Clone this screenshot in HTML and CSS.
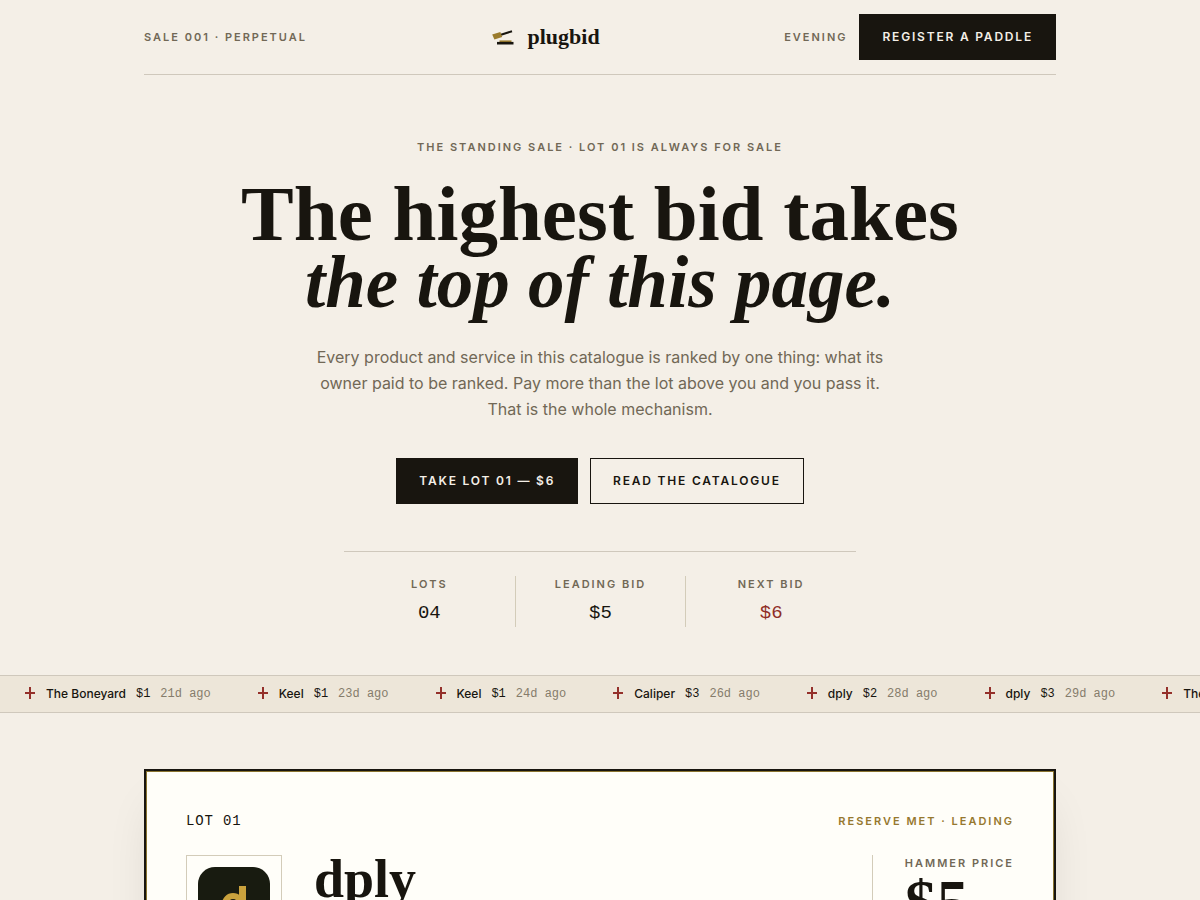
FILE: index.html
```html
<!DOCTYPE html>
<html lang="en">

<head>
    <meta charset="utf-8">
    <meta name="viewport" content="width=device-width, initial-scale=1">
    <title>plugbid</title>
    <link rel="stylesheet" href="styles.css">
</head>

<body>
    <header class="container">
        <div class="masthead">
            <span class="label">Sale 001 · Perpetual</span>
            <a class="brand" href="#">
                <svg class="brand-mark" viewBox="0 0 24 24" aria-hidden="true">
                    <path d="M10 9.800 L21 6.200" stroke="#18150f" stroke-width="2" />
                    <path d="M1.200 9.600 L9.300 7 L11.200 12 L3.400 14.400 Z" fill="#9a7b2c" />
                    <path d="M8.500 16.200 H20.500" stroke="#9a7b2c" stroke-width="1.600" />
                    <path d="M6 18.200 H22.500" stroke="#18150f" stroke-width="2.600" />
                </svg>
                <span class="brand-name">plugbid</span>
            </a>
            <div class="masthead-actions">
                <button type="button" class="label theme-toggle">Evening</button>
                <a class="button button-dark" href="#register">Register a paddle</a>
            </div>
        </div>
    </header>

    <main>
        <section class="hero container">
            <p class="label">The standing sale · Lot 01 is always for sale</p>
            <h1 class="hero-title">The highest bid takes <em>the top of this page.</em></h1>
            <p class="hero-text">Every product and service in this catalogue is ranked by one thing: what its owner paid to be ranked. Pay more than the lot above you and you pass it. That is the whole mechanism.</p>
            <div class="hero-actions">
                <a class="button button-dark" href="#take">Take lot 01 — $6</a>
                <a class="button" href="#lot-01">Read the catalogue</a>
            </div>
            <dl class="stats">
                <div class="stat">
                    <dt class="label">Lots</dt>
                    <dd>04</dd>
                </div>
                <div class="stat">
                    <dt class="label">Leading bid</dt>
                    <dd>$5</dd>
                </div>
                <div class="stat">
                    <dt class="label">Next bid</dt>
                    <dd class="next-bid">$6</dd>
                </div>
            </dl>
        </section>

        <ul class="ticker">
            <li><span class="plus"></span><b>The Boneyard</b><data value="1">$1</data><time>21d ago</time></li>
            <li><span class="plus"></span><b>Keel</b><data value="1">$1</data><time>23d ago</time></li>
            <li><span class="plus"></span><b>Keel</b><data value="1">$1</data><time>24d ago</time></li>
            <li><span class="plus"></span><b>Caliper</b><data value="3">$3</data><time>26d ago</time></li>
            <li><span class="plus"></span><b>dply</b><data value="2">$2</data><time>28d ago</time></li>
            <li><span class="plus"></span><b>dply</b><data value="3">$3</data><time>29d ago</time></li>
            <li><span class="plus"></span><b>The Boneyard</b></li>
        </ul>

        <section class="container">
            <article class="lot" id="lot-01">
                <div class="lot-head">
                    <span class="lot-number">LOT 01</span>
                    <span class="label lot-status">Reserve met · Leading</span>
                </div>
                <div class="lot-body">
                    <div class="lot-picture">
                        <svg viewBox="0 0 72 72" aria-hidden="true">
                            <rect width="72" height="72" rx="17" fill="#181b10" />
                            <circle cx="35" cy="37" r="8" fill="none" stroke="#c9a23d" stroke-width="6" />
                            <path d="M44.500 19 V48" stroke="#c9a23d" stroke-width="7" />
                        </svg>
                    </div>
                    <h2 class="lot-name">dply</h2>
                    <div class="lot-price">
                        <span class="label">Hammer price</span>
                        <strong>$5</strong>
                    </div>
                </div>
            </article>
        </section>
    </main>
</body>

</html>
```

FILE: styles.css
```css
* {
    box-sizing: border-box;
}

body {
    margin: 0;
    background-color: #f4efe7;
    color: #18150f;
    font-family: Inter, sans-serif;
    overflow-x: hidden;
}

p,
h1,
h2,
dl,
dd,
ul {
    margin: 0;
}

.container {
    max-width: 960px;
    margin: 0 auto;
    padding: 0 24px;
}

.label {
    color: #716856;
    font-size: 11px;
    font-weight: 600;
    line-height: 16px;
    letter-spacing: 2px;
    text-transform: uppercase;
}

.masthead {
    display: flex;
    align-items: center;
    justify-content: space-between;
    padding: 14px 0;
    border-bottom: 1px solid #cfc8bc;
}

.brand {
    display: flex;
    align-items: center;
    gap: 12px;
    color: #18150f;
    text-decoration: none;
}

.brand-mark {
    width: 24px;
    height: 24px;
}

.brand-name {
    font-family: "Liberation Serif", serif;
    font-size: 22px;
    font-weight: bold;
    line-height: 24px;
}

.masthead-actions {
    display: flex;
    align-items: center;
    gap: 12px;
}

.theme-toggle {
    padding: 0;
    border: 0;
    background: none;
    font-family: inherit;
}

.button {
    padding: 14px 22px;
    border: 1px solid #18150f;
    color: #18150f;
    font-size: 12px;
    font-weight: 600;
    line-height: 16px;
    letter-spacing: 0.15em;
    text-decoration: none;
    text-transform: uppercase;
}

.button-dark {
    background-color: #18150f;
    color: #f4efe7;
}

.hero {
    display: flex;
    flex-direction: column;
    align-items: center;
    padding-top: 64px;
    padding-bottom: 48px;
    text-align: center;
}

.hero-title {
    margin-top: 24px;
    font-family: "Liberation Serif", serif;
    font-size: 79px;
    font-weight: bold;
    line-height: 69px;
}

.hero-title em {
    display: block;
    font-size: 73px;
}

.hero-text {
    max-width: 580px;
    margin-top: 27px;
    color: #716856;
    font-size: 16px;
    line-height: 26px;
}

.hero-actions {
    display: flex;
    gap: 12px;
    margin-top: 36px;
}

.stats {
    display: grid;
    grid-template-columns: repeat(3, 1fr);
    width: 100%;
    max-width: 512px;
    margin-top: 47px;
    padding-top: 24px;
    border-top: 1px solid #cfc8bc;
}

.stat + .stat {
    border-left: 1px solid #d3ccb9;
}

.stat dd {
    margin-top: 8px;
    font-family: "Liberation Mono", monospace;
    font-size: 19px;
    line-height: 27px;
}

.stat .next-bid {
    color: #8f2d26;
}

.ticker {
    display: flex;
    gap: 46px;
    padding: 10px 24px;
    overflow: hidden;
    border-top: 1px solid #cfc8bc;
    border-bottom: 1px solid #cfc8bc;
    background-color: #ede6d9;
    font-size: 12px;
    line-height: 16px;
    list-style: none;
    white-space: nowrap;
}

.ticker li {
    display: flex;
    flex-shrink: 0;
    align-items: center;
    gap: 10px;
}

.ticker b {
    font-weight: 500;
}

.ticker data,
.ticker time {
    font-family: "Liberation Mono", monospace;
}

.ticker time {
    color: #857c6b;
}

.plus {
    width: 12px;
    height: 14px;
    background:
        linear-gradient(#94302a, #94302a) 1px 5px / 10px 2px no-repeat,
        linear-gradient(#94302a, #94302a) 5px 0 / 2px 12px no-repeat;
}

.lot {
    margin: 56px 0;
    padding: 41px 40px 40px;
    border: 2px solid #18150f;
    background-color: #fffef9;
    box-shadow: inset 0 0 0 1px #8a7430, 0 24px 48px -16px rgba(24, 21, 15, 0.14);
}

.lot-head {
    display: flex;
    align-items: center;
    justify-content: space-between;
}

.lot-number {
    font-family: "Liberation Mono", monospace;
    font-size: 14px;
    line-height: 18px;
    letter-spacing: 0.06em;
}

.lot-status {
    color: #96782f;
}

.lot-body {
    display: flex;
    align-items: flex-start;
    gap: 32px;
    margin-top: 25px;
}

.lot-picture {
    width: 96px;
    height: 96px;
    padding: 11px;
    border: 1px solid #d3ccb9;
}

.lot-picture svg {
    display: block;
}

.lot-name {
    flex: 1;
    font-family: "Liberation Serif", serif;
    font-size: 54px;
    font-weight: bold;
    line-height: 48px;
}

.lot-price {
    display: flex;
    flex-direction: column;
    padding-left: 32px;
    border-left: 1px solid #d3ccb9;
}

.lot-price strong {
    font-family: "Liberation Serif", serif;
    font-size: 64px;
    line-height: 64px;
}
```
